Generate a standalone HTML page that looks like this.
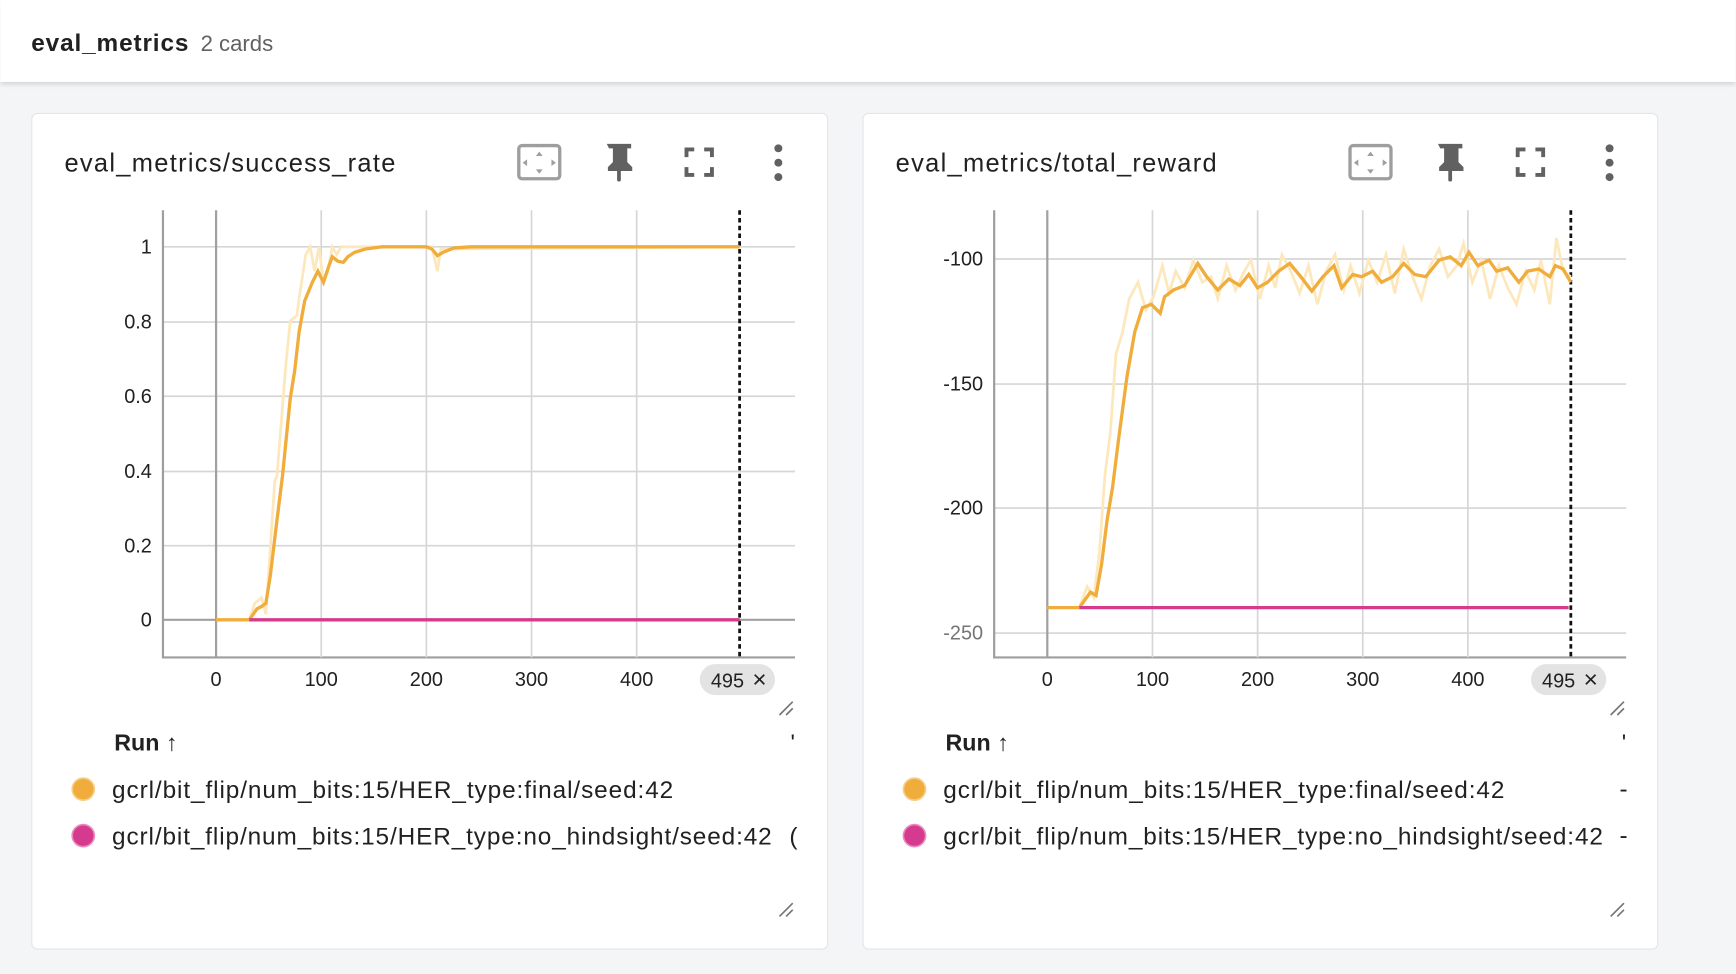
<!DOCTYPE html>
<html><head><meta charset="utf-8"><style>
html,body{margin:0;padding:0;background:#f4f5f7;}
svg{display:block;font-family:"Liberation Sans",Arial,sans-serif;}
</style></head><body>
<svg width="1736" height="974" viewBox="0 0 1568 880" xmlns="http://www.w3.org/2000/svg">
<defs>
<filter id="sh" x="-5%" y="-50%" width="110%" height="200%"><feDropShadow dx="0" dy="2" stdDeviation="2.5" flood-color="#000" flood-opacity="0.15"/></filter>
<g id="icons">
  <rect x="468.5" y="131.5" width="37" height="30" rx="3" fill="none" stroke="#9e9e9e" stroke-width="3"/>
  <path d="M487 137l-3 4h6zM487 157l-3-4h6zM472 147l4-3v6zM502 147l-4-3v6z" fill="#9e9e9e"/>
  <path d="M548 130h22v4h-3.5v12.5l4.5 4.5v3.5h-22v-3.5l4.5-4.5v-12.5h-3.5z" fill="#616161"/>
  <rect x="557.3" y="153" width="3.4" height="11" rx="1.5" fill="#616161"/>
  <path d="M556 134v13" stroke="#fff" stroke-width="0"/>
  <path d="M620 142v-7h7M636 135h7v7M643 151v7h-7M627 158h-7v-7" fill="none" stroke="#616161" stroke-width="3.5"/>
  <circle cx="703" cy="134" r="3.6" fill="#616161"/><circle cx="703" cy="147" r="3.6" fill="#616161"/><circle cx="703" cy="160" r="3.6" fill="#616161"/>
  <path d="M704 646l12-12M710 646l6-6" stroke="#757575" stroke-width="1.5"/>
  <path d="M704 828l12-12M710 828l6-6" stroke="#757575" stroke-width="1.5"/>
  <rect x="632" y="600" width="68" height="28" rx="14" fill="#e3e3e3"/>
  <text x="657" y="621" font-size="18" text-anchor="middle" fill="#212121">495</text>
  <text x="686" y="621" font-size="22" text-anchor="middle" fill="#212121">×</text>
  <text x="103" y="678" font-size="21" font-weight="bold" fill="#212121">Run ↑</text>
  <circle cx="75" cy="713" r="10" fill="#f0ad3c" stroke="#f6cf8a" stroke-width="1.5"/>
  <circle cx="75" cy="755" r="10" fill="#d63a8f" stroke="#e88cbd" stroke-width="1.5"/>
  <line x1="668" y1="190" x2="668" y2="594" stroke="#111" stroke-width="2.5" stroke-dasharray="4 3"/>
  <path d="M147 190V594H718" fill="none" stroke="#9e9e9e" stroke-width="2"/>
  <g stroke="#d6d6d6" stroke-width="1.5">
    <line x1="290" y1="190" x2="290" y2="594"/><line x1="385" y1="190" x2="385" y2="594"/><line x1="480" y1="190" x2="480" y2="594"/><line x1="575" y1="190" x2="575" y2="594"/>
  </g>
  <line x1="195" y1="190" x2="195" y2="594" stroke="#a0a0a0" stroke-width="2"/>
  <g font-size="18" fill="#212121" text-anchor="middle">
    <text x="195" y="620">0</text><text x="290" y="620">100</text><text x="385" y="620">200</text><text x="480" y="620">300</text><text x="575" y="620">400</text>
  </g>
</g>
</defs>
<rect x="0" y="0" width="1568" height="74" fill="#fff" filter="url(#sh)"/>
<text x="28" y="46" font-size="22" font-weight="bold" fill="#212121" textLength="142">eval_metrics</text>
<text x="181" y="46" font-size="20" fill="#616161">2 cards</text>

<rect x="28.5" y="102.5" width="719" height="755" rx="5" fill="#fff" stroke="#e4e5e8"/>
<rect x="779.5" y="102.5" width="718" height="755" rx="5" fill="#fff" stroke="#e4e5e8"/>

<!-- card 1 -->
<g stroke="#d6d6d6" stroke-width="1.5">
  <line x1="147" y1="223" x2="718" y2="223"/><line x1="147" y1="291" x2="718" y2="291"/><line x1="147" y1="358" x2="718" y2="358"/><line x1="147" y1="426" x2="718" y2="426"/><line x1="147" y1="493" x2="718" y2="493"/>
</g>
<line x1="147" y1="560" x2="718" y2="560" stroke="#a0a0a0" stroke-width="2"/>
<use href="#icons"/>
<text x="58" y="155" font-size="23" fill="#212121" textLength="299">eval_metrics/success_rate</text>
<g font-size="18" fill="#212121" text-anchor="end">
  <text x="137" y="229">1</text><text x="137" y="297">0.8</text><text x="137" y="364">0.6</text><text x="137" y="432">0.4</text><text x="137" y="499">0.2</text><text x="137" y="566">0</text>
</g>
<path d="M195 560L225 560L230 545L236 540L240 555L243 510L248 435L250 430L254 380L258 330L262 290L268 285L270 270L276 230L280 223L284 245L288 223L292 255L296 245L300 223L304 230L308 223L385 223L390 223L395 245L398 225L668 223" fill="none" stroke="#fde8bd" stroke-width="2.5"/>
<path d="M195 560L225 560L232 550L236 548L240 545L244 520L250 470L255 430L258 400L262 360L266 335L270 300L275 272L282 255L287 245L292 255L297 240L300 232L305 236L310 237L314 232L320 228L330 225L345 223L385 223L390 225L395 231L400 228L410 224L425 223L668 223" fill="none" stroke="#f0ad3c" stroke-width="3"/>
<line x1="225" y1="560" x2="668" y2="560" stroke="#d63a8f" stroke-width="3"/>
<text x="101" y="721" font-size="22" fill="#212121" textLength="507">gcrl/bit_flip/num_bits:15/HER_type:final/seed:42</text>
<text x="101" y="763" font-size="22" fill="#212121" textLength="596">gcrl/bit_flip/num_bits:15/HER_type:no_hindsight/seed:42</text>
<text x="714" y="678" font-size="21" fill="#212121">'</text>
<text x="713" y="763" font-size="22" fill="#212121">(</text>

<!-- card 2 -->
<g stroke="#d6d6d6" stroke-width="1.5">
  <line x1="898" y1="234" x2="1469" y2="234"/><line x1="898" y1="347" x2="1469" y2="347"/><line x1="898" y1="459" x2="1469" y2="459"/><line x1="898" y1="572" x2="1469" y2="572"/>
</g>
<use href="#icons" transform="translate(751 0)"/>
<text x="809" y="155" font-size="23" fill="#212121" textLength="290">eval_metrics/total_reward</text>
<g font-size="18" fill="#212121" text-anchor="end">
  <text x="888" y="240">-100</text><text x="888" y="353">-150</text><text x="888" y="465">-200</text><text x="888" y="578" fill="#757575">-250</text>
</g>
<path d="M946 549L975 549L982 530L988 540L993 500L998 430L1003 390L1008 320L1014 300L1020 270L1028 255L1035 280L1042 268L1050 240L1056 265L1062 245L1070 260L1078 235L1086 255L1094 250L1100 270L1108 240L1116 262L1124 245L1130 235L1138 270L1146 240L1152 260L1158 230L1166 245L1174 265L1182 240L1190 275L1198 245L1206 230L1214 262L1220 240L1228 265L1236 235L1244 255L1252 230L1260 265L1268 225L1276 250L1284 270L1292 240L1300 225L1308 250L1316 240L1322 220L1330 255L1338 235L1346 270L1354 240L1362 260L1370 275L1378 245L1386 262L1392 235L1400 275L1406 215L1412 245L1419 250" fill="none" stroke="#fde8bd" stroke-width="2.5"/>
<path d="M946 549L975 549L985 535L990 538L995 510L1000 470L1005 440L1010 400L1018 340L1025 300L1032 278L1040 275L1048 283L1052 268L1060 262L1070 258L1082 238L1090 250L1100 262L1110 252L1120 258L1128 248L1136 260L1145 255L1155 245L1165 238L1175 250L1185 263L1195 250L1205 240L1212 260L1222 248L1230 250L1240 245L1248 255L1258 250L1268 238L1278 248L1288 250L1300 235L1310 232L1320 240L1327 228L1335 240L1345 235L1352 245L1362 242L1372 255L1380 245L1390 243L1400 250L1405 240L1412 243L1419 255" fill="none" stroke="#f0ad3c" stroke-width="3"/>
<line x1="975" y1="549" x2="1417" y2="549" stroke="#d63a8f" stroke-width="3"/>
<text x="852" y="721" font-size="22" fill="#212121" textLength="507">gcrl/bit_flip/num_bits:15/HER_type:final/seed:42</text>
<text x="852" y="763" font-size="22" fill="#212121" textLength="596">gcrl/bit_flip/num_bits:15/HER_type:no_hindsight/seed:42</text>
<text x="1463" y="720" font-size="22" fill="#212121">-</text>
<text x="1463" y="762" font-size="22" fill="#212121">-</text>
<text x="1465" y="678" font-size="21" fill="#212121">'</text>
</svg>
</body></html>
